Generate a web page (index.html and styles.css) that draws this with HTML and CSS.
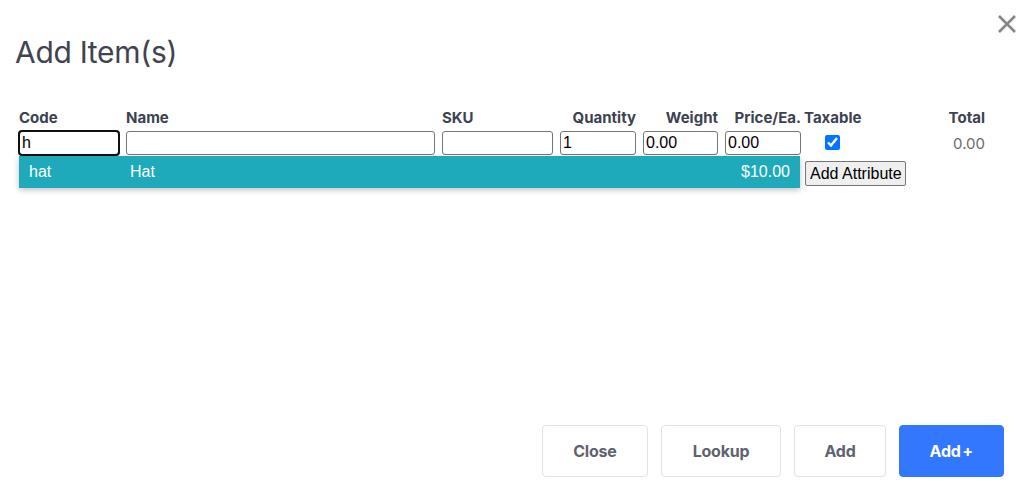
FILE: index.html
```html
<!doctype html>
<html>
<head>
<meta charset="UTF-8">
<title>Add Item(s)</title>
<link rel="stylesheet" href="styles.css">
</head>

<body>
  <div class="modal">
    <a href="#" class="modal-close" title="Close">
      <svg width="20" height="20" viewBox="0 0 20 20"><path d="M2 2 L18 18 M18 2 L2 18" stroke="#858585" stroke-width="2.6" fill="none"/></svg>
    </a>
    <h1 class="modal-title">Add Item(s)</h1>

    <div class="items">
      <!-- header -->
      <div class="lbl">Code</div>
      <div class="lbl">Name</div>
      <div class="lbl">SKU</div>
      <div class="lbl right">Quantity</div>
      <div class="lbl right">Weight</div>
      <div class="lbl right">Price/Ea.</div>
      <div class="lbl center tax">Taxable</div>
      <div class="lbl right">Total</div>

      <!-- item row -->
      <div class="cell code-cell">
        <input type="text" class="fld is-focused" value="h">
        <ul class="suggest">
          <li>
            <span class="s-code">hat</span>
            <span class="s-name">Hat</span>
            <span class="s-price">$10.00</span>
          </li>
        </ul>
      </div>
      <div class="cell"><input type="text" class="fld"></div>
      <div class="cell"><input type="text" class="fld"></div>
      <div class="cell"><input type="text" class="fld" value="1"></div>
      <div class="cell"><input type="text" class="fld" value="0.00"></div>
      <div class="cell"><input type="text" class="fld" value="0.00"></div>
      <div class="cell center tax"><input type="checkbox" checked></div>
      <div class="cell total">0.00</div>

      <!-- attributes -->
      <div class="cell attr"><button type="button" class="attr-btn">Add Attribute</button></div>
    </div>

    <div class="modal-foot">
      <button type="button" class="btn">Close</button>
      <button type="button" class="btn btn-wide">Lookup</button>
      <button type="button" class="btn btn-narrow">Add</button>
      <button type="button" class="btn btn-primary">Add +</button>
    </div>
  </div>
</body>
</html>
```

FILE: styles.css
```css
html, body {
  margin: 0;
  height: 100%;
  background-color: #fff;
}
body {
  font-family: Inter, "Liberation Sans", sans-serif;
  color: #3d4250;
}
.modal {
  position: relative;
  min-height: 100%;
  box-sizing: border-box;
  padding: 34px 43px 18px 15px;
  display: flex;
  flex-direction: column;
}
.modal-close {
  position: absolute;
  top: 14px;
  right: 11px;
  display: block;
  width: 20px;
  height: 20px;
}
.modal-close svg {
  display: block;
}
.modal-title {
  margin: 0;
  font-size: 30px;
  line-height: 36px;
  font-weight: 400;
  color: #3f4450;
  letter-spacing: -0.3px;
}
/* item grid */
.items {
  margin: 38px 0 0 4px;
  display: grid;
  grid-template-columns: 100px 309px 111px 76px 75px 76px 56px 1fr;
  column-gap: 7px;
  row-gap: 6px;
  align-items: center;
}
.lbl {
  font-size: 15px;
  font-weight: 700;
  line-height: 20px;
  color: #3d4250;
  margin-bottom: -3px;
  white-space: nowrap;
}
.right {
  text-align: right;
}
.center {
  text-align: center;
}
.tax {
  margin-left: -4px;
  margin-right: 4px;
}
.cell {
  position: relative;
}
.fld {
  box-sizing: border-box;
  width: 100%;
  height: 24px;
  margin: 0;
  padding: 1px 2px;
  border: 1px solid #767676;
  border-radius: 3px;
  font-family: "Liberation Sans", Arial, sans-serif;
  font-size: 16px;
  color: #000;
  background: #fff;
}
.fld.is-focused {
  outline: 2px solid #101010;
  outline-offset: -1px;
  border-radius: 3px;
}
.tax input {
  margin: -5px 0 0 1px;
  width: 15px;
  height: 15px;
  vertical-align: middle;
}
.total {
  text-align: right;
  font-size: 15px;
  color: #6b6b6b;
  padding-top: 1px;
}
.attr {
  grid-column: 7;
  margin-left: -3px;
  white-space: nowrap;
}
.attr-btn {
  font-family: "Liberation Sans", Arial, sans-serif;
  font-size: 16px;
  color: #000;
  height: 25px;
  padding: 0 3px 0 4px;
  background: #efefef;
  border: 1px solid #767676;
  border-radius: 2px;
}
/* autocomplete */
.suggest {
  position: absolute;
  left: 0;
  top: 25px;
  width: 781px;
  margin: 0;
  padding: 0;
  list-style: none;
  background: #fff;
  box-shadow: 0 2px 6px rgba(0, 0, 0, 0.25);
  z-index: 2;
}
.suggest li {
  display: flex;
  align-items: center;
  height: 32px;
  padding: 0 10px;
  background-color: #1eaabb;
  color: #fff;
  font-family: "Liberation Sans", Arial, sans-serif;
  font-size: 16px;
}
.s-code {
  width: 101px;
}
.s-name {
  flex: 1;
}
/* footer */
.modal-foot {
  margin-top: auto;
  margin-right: -19px;
  display: flex;
  justify-content: flex-end;
  gap: 13px;
}
.btn {
  height: 52px;
  padding: 0 30px;
  font-family: Inter, "Liberation Sans", sans-serif;
  font-size: 16px;
  font-weight: 700;
  color: #5f6270;
  background: #fff;
  border: 1px solid #e2e2e2;
  border-radius: 4px;
  letter-spacing: -0.2px;
}
.btn-wide {
  padding: 0 31px;
}
.btn-narrow {
  padding: 0 29px;
}
.btn-primary {
  color: #fff;
  background: #3377ff;
  border-color: #3377ff;
  word-spacing: -2px;
}
```
